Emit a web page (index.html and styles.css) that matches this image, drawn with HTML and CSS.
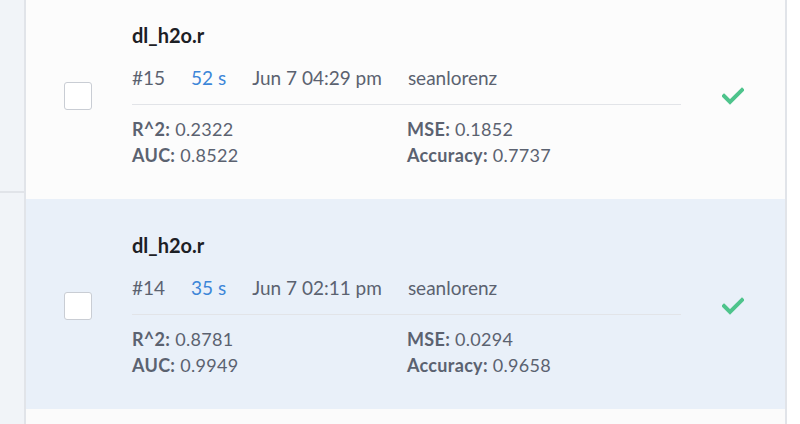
FILE: index.html
```html
<!DOCTYPE html>
<html>
<head>
<meta charset="utf-8">
<link rel="stylesheet" href="styles.css">
</head>
<body>
<div class="layout">
  <aside class="sidebar">
    <div class="sidebar-block"></div>
  </aside>
  <main class="list">
    <div class="run">
      <div class="checkbox"></div>
      <div class="run-body">
        <div class="run-title">dl_h2o.r</div>
        <div class="run-meta">
          <span>#15</span>
          <span class="duration">52 s</span>
          <span>Jun 7 04:29 pm</span>
          <span>seanlorenz</span>
        </div>
        <div class="metrics">
          <div><b>R^2:</b> 0.2322</div>
          <div><b>MSE:</b> 0.1852</div>
          <div><b>AUC:</b> 0.8522</div>
          <div><b>Accuracy:</b> 0.7737</div>
        </div>
      </div>
      <div class="status">
        <svg width="22" height="18" viewBox="0 0 22 18"><polyline points="2,9 8,15 20,3" fill="none" stroke="#4ec48c" stroke-width="4" stroke-linecap="square"/></svg>
      </div>
    </div>
    <div class="run selected">
      <div class="checkbox"></div>
      <div class="run-body">
        <div class="run-title">dl_h2o.r</div>
        <div class="run-meta">
          <span>#14</span>
          <span class="duration">35 s</span>
          <span>Jun 7 02:11 pm</span>
          <span>seanlorenz</span>
        </div>
        <div class="metrics">
          <div><b>R^2:</b> 0.8781</div>
          <div><b>MSE:</b> 0.0294</div>
          <div><b>AUC:</b> 0.9949</div>
          <div><b>Accuracy:</b> 0.9658</div>
        </div>
      </div>
      <div class="status">
        <svg width="22" height="18" viewBox="0 0 22 18"><polyline points="2,9 8,15 20,3" fill="none" stroke="#4ec48c" stroke-width="4" stroke-linecap="square"/></svg>
      </div>
    </div>
  </main>
</div>
</body>
</html>
```
FILE: styles.css
```css
html, body {
  margin: 0;
  padding: 0;
  background: #ffffff;
  font-family: Lato, "Open Sans", sans-serif;
  overflow: hidden;
}
.layout {
  display: flex;
  height: 424px;
}
.sidebar {
  width: 24px;
  background: #f1f4f8;
  border-right: 2px solid #e1e4e9;
  flex: none;
}
.sidebar-block {
  height: 191px;
  border-bottom: 2px solid #e1e4e9;
}
.list {
  width: 759px;
  flex: none;
  background: #fbfbfb;
  border-right: 2px solid #e1e4e9;
  margin-top: -11px;
}
.run {
  display: flex;
  align-items: center;
  padding: 34px 0 31px 38px;
  background: #fcfcfc;
}
.run.selected {
  background: #e9f0f9;
}
.checkbox {
  width: 26px;
  height: 26px;
  border: 1.5px solid #c9cdd4;
  border-radius: 3px;
  background: #ffffff;
  flex: none;
  margin-right: 40px;
}
.run-body {
  width: 549px;
  color: #5b6270;
}
.run-title {
  font-size: 20px;
  line-height: 24px;
  font-weight: 700;
  color: #1d2025;
}
.run-meta {
  display: flex;
  gap: 26px;
  margin-top: 19px;
  font-size: 19px;
  line-height: 24px;
  padding-bottom: 14px;
  border-bottom: 1px solid #e2e4e8;
}
.duration {
  color: #3d86d8;
}
.metrics {
  display: grid;
  grid-template-columns: 275px 1fr;
  margin-top: 11px;
  font-size: 18px;
  line-height: 26px;
  letter-spacing: 0.3px;
}
.metrics b {
  font-weight: 700;
}
.status {
  margin-left: 41px;
  display: flex;
  align-items: center;
}
```
